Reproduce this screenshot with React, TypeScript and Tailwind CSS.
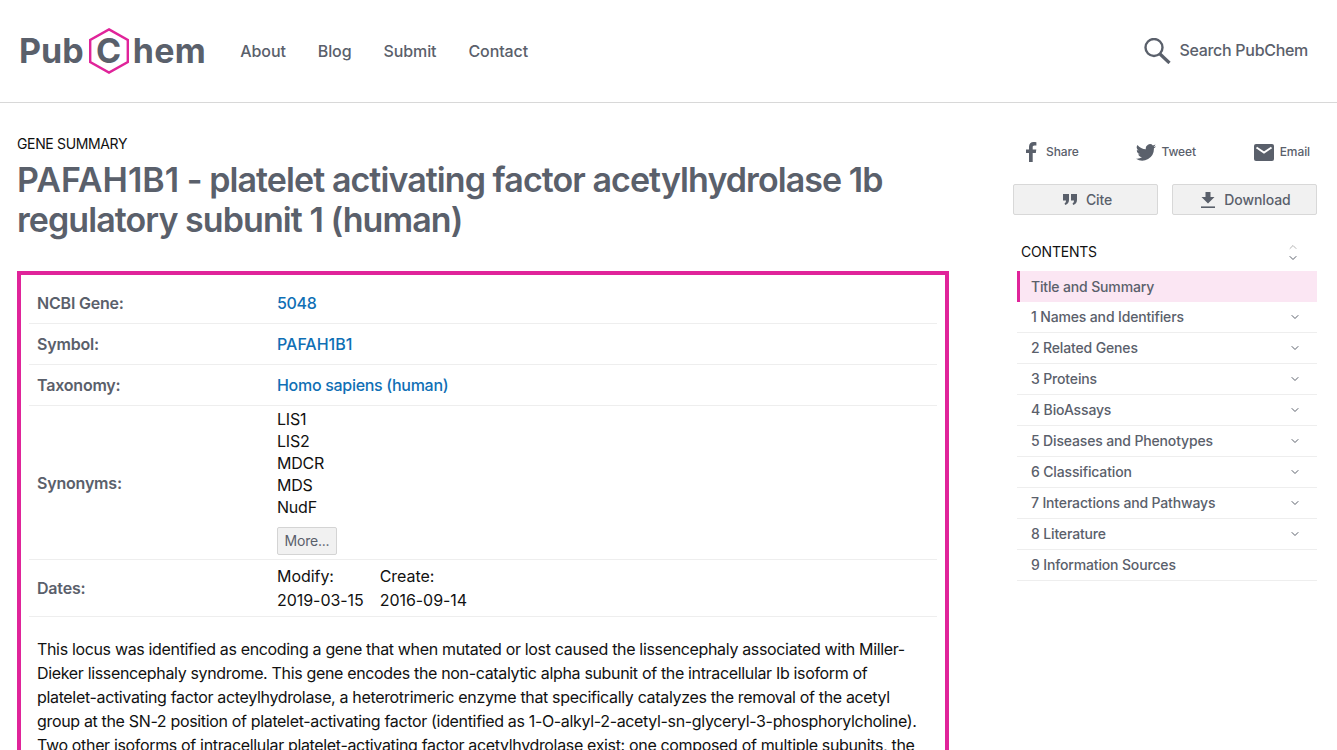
import { ChevronDown, ChevronUp } from 'lucide-react';

const navLinks = ['About', 'Blog', 'Submit', 'Contact'];

const contents = [
  { label: '1 Names and Identifiers', more: true },
  { label: '2 Related Genes', more: true },
  { label: '3 Proteins', more: true },
  { label: '4 BioAssays', more: true },
  { label: '5 Diseases and Phenotypes', more: true },
  { label: '6 Classification', more: true },
  { label: '7 Interactions and Pathways', more: true },
  { label: '8 Literature', more: true },
  { label: '9 Information Sources', more: false },
];

function Logo() {
  return (
    <div className="-ml-[1px] flex items-center text-[34px] font-bold leading-none text-[#5a606b]">
      <span>Pub</span>
      <span className="relative ml-[5px] mr-[4px] flex h-[46px] w-[40px] items-center justify-center">
        <svg viewBox="0 0 40 46" className="absolute inset-0 h-full w-full" fill="none">
          <path d="M20 1.4 L38.8 12 V34 L20 44.6 L1.2 34 V12 Z" stroke="#e0249a" strokeWidth="2.4" />
        </svg>
        <span>C</span>
      </span>
      <span className="tracking-[0.4px]">hem</span>
    </div>
  );
}

function SearchIcon() {
  return (
    <svg viewBox="0 0 27 26" className="h-[26px] w-[27px]" fill="none" stroke="#5a606b">
      <circle cx="10" cy="9.5" r="8.5" strokeWidth="2.4" />
      <path d="M16 16 L25.5 25" strokeWidth="3.2" />
    </svg>
  );
}

function FacebookIcon() {
  return (
    <svg viewBox="0 0 11 20" className="h-[20px] w-[11px]" fill="#5a606b">
      <path d="M3 20 V11 H0 V7.4 H3 V4.8 C3 1.7 4.8 0 7.6 0 C8.9 0 10 .1 10.4 .2 V3.4 H8.5 C7 3.4 6.7 4.1 6.7 5.2 V7.4 H10.3 L9.8 11 H6.7 V20 Z" />
    </svg>
  );
}

function TwitterIcon() {
  return (
    <svg viewBox="0 0 24 20" className="h-[17px] w-[20px]" fill="#5a606b">
      <path d="M24 2.4 a9.8 9.8 0 0 1-2.8.8 4.9 4.9 0 0 0 2.2-2.7 9.9 9.9 0 0 1-3.1 1.2 4.9 4.9 0 0 0-8.4 4.5 A14 14 0 0 1 1.7 1 a4.9 4.9 0 0 0 1.5 6.6 4.9 4.9 0 0 1-2.2-.6 4.9 4.9 0 0 0 3.9 4.9 4.9 4.9 0 0 1-2.2.1 4.9 4.9 0 0 0 4.6 3.4 A9.9 9.9 0 0 1 0 17.4 14 14 0 0 0 21.5 5 a10 10 0 0 0 2.5-2.6 Z" />
    </svg>
  );
}

function MailIcon() {
  return (
    <svg viewBox="0 0 20 17" className="h-[17px] w-[20px]">
      <rect width="20" height="17" rx="2" fill="#5a606b" />
      <path d="M2.5 3.5 L10 8.5 L17.5 3.5" fill="none" stroke="#ffffff" strokeWidth="2" />
    </svg>
  );
}

function QuoteIcon() {
  return (
    <svg viewBox="0 0 14 11" className="h-[11px] w-[14px]" fill="#5a606b">
      <path d="M0 0 H6 V6 C6 8.5 4.5 10.2 2.2 11 L1.5 9.4 C2.6 8.8 3 8 3 6.5 H0 Z" />
      <path d="M8 0 H14 V6 C14 8.5 12.5 10.2 10.2 11 L9.5 9.4 C10.6 8.8 11 8 11 6.5 H8 Z" />
    </svg>
  );
}

function DownloadIcon() {
  return (
    <svg viewBox="0 0 14 16" className="h-[16px] w-[14px]" fill="#5a606b">
      <path d="M4.5 0 H9.5 V5 H13.5 L7 11.5 L.5 5 H4.5 Z" />
      <rect y="14.4" width="14" height="1.6" />
    </svg>
  );
}

function Row({ label, children }: { label: string; children: React.ReactNode }) {
  return (
    <div className="flex items-center border-b border-[#eeeeee] px-2">
      <div className="w-[240px] shrink-0 font-semibold tracking-[-0.2px] text-[#5a606b]">{label}</div>
      <div>{children}</div>
    </div>
  );
}

export default function App() {
  return (
    <div className="h-[750px] overflow-hidden bg-white font-['Inter',sans-serif] text-[#111111]">
      <header className="flex h-[103px] items-center justify-between border-b border-[#d8d8d8] pl-5 pr-[29px]">
        <div className="flex items-center">
          <Logo />
          <nav className="ml-[34px] flex gap-8 font-medium tracking-[-0.1px] text-[#5a606b]">
            {navLinks.map((link) => (
              <a key={link}>{link}</a>
            ))}
          </nav>
        </div>
        <div className="flex items-center gap-[8px] font-medium tracking-[-0.3px] text-[#5a606b]">
          <SearchIcon />
          <span className="-mt-[2px]">Search PubChem</span>
        </div>
      </header>

      <div className="flex justify-between pl-[17px] pr-5">
        <main className="w-[932px] pt-[33px]">
          <div className="text-sm leading-[16px] tracking-[-0.35px]">GENE SUMMARY</div>
          <h1 className="mt-[8px] text-[34px] font-semibold leading-[40px] tracking-[-0.93px] text-[#5a606b]">
            <span className="tracking-normal">PAFAH1B1</span> - platelet activating factor acetylhydrolase 1b regulatory subunit 1 (human)
          </h1>

          <section className="mt-[31px] border-4 border-[#e0249a] px-2 pt-2">
            <Row label="NCBI Gene:">
              <a className="block py-2 font-medium tracking-[-0.3px] text-[#0f6fb5]">5048</a>
            </Row>
            <Row label="Symbol:">
              <a className="block py-2 font-medium text-[#0f6fb5]">PAFAH1B1</a>
            </Row>
            <Row label="Taxonomy:">
              <a className="block py-2 font-medium tracking-[-0.3px] text-[#0f6fb5]">Homo sapiens (human)</a>
            </Row>
            <Row label="Synonyms:">
              <div className="pb-[4px] pt-[2px] leading-[22px] tracking-[-0.2px]">
                <div>LIS1</div>
                <div>LIS2</div>
                <div>MDCR</div>
                <div>MDS</div>
                <div>NudF</div>
                <button className="mt-[9px] block h-[28px] w-[60px] rounded-[2px] border border-[#d4d4d4] bg-[#f1f1f1] text-sm text-[#5a606b]">
                  More...
                </button>
              </div>
            </Row>
            <Row label="Dates:">
              <div className="flex gap-4 py-[4px] leading-[24px] tracking-[-0.05px]">
                <div>
                  <div>Modify:</div>
                  <div>2019-03-15</div>
                </div>
                <div>
                  <div>Create:</div>
                  <div>2016-09-14</div>
                </div>
              </div>
            </Row>
            <p className="pb-4 pl-2 pr-[12px] pt-5 leading-[24px] tracking-[-0.34px]">
              This locus was identified as encoding a gene that when mutated or lost caused the lissencephaly associated with Miller-Dieker lissencephaly syndrome. This gene encodes the non-catalytic alpha subunit of the intracellular Ib isoform of platelet-activating factor acteylhydrolase, a heterotrimeric enzyme that specifically catalyzes the removal of the acetyl group at the SN-2 position of platelet-activating factor (identified as 1-O-alkyl-2-acetyl-sn-glyceryl-3-phosphorylcholine). Two other isoforms of intracellular platelet-activating factor acetylhydrolase exist: one composed of multiple subunits, the
            </p>
          </section>
        </main>

        <aside className="w-[304px] pt-[39px] text-[#5a606b]">
          <div className="flex items-center justify-between pl-[13px] pr-[7px] text-xs font-medium tracking-[-0.1px]">
            <span className="flex items-center gap-[9px]">
              <FacebookIcon />
              Share
            </span>
            <span className="flex items-center gap-[5px]">
              <TwitterIcon />
              Tweet
            </span>
            <span className="flex items-center gap-[6px]">
              <MailIcon />
              Email
            </span>
          </div>

          <div className="mt-[22px] flex gap-[14px] text-sm font-medium tracking-[-0.1px]">
            <button className="flex h-[31px] w-[145px] items-center justify-center gap-[9px] rounded-[2px] border border-[#d8d8d8] bg-[#f1f1f1] pl-[4px]">
              <QuoteIcon />
              Cite
            </button>
            <button className="flex h-[31px] w-[145px] items-center justify-center gap-[9px] rounded-[2px] border border-[#d8d8d8] bg-[#f1f1f1] pl-[3px]">
              <DownloadIcon />
              Download
            </button>
          </div>

          <div className="mt-[24px] flex h-[26px] items-center justify-between pl-2 pr-[18px] text-sm tracking-[-0.2px] text-[#111111]">
            <span>CONTENTS</span>
            <span className="flex flex-col items-center">
              <ChevronUp className="-mb-[1px] h-[12px] w-[12px] text-[#b5b5b5]" />
              <ChevronDown className="h-[12px] w-[12px] text-[#5a606b]" />
            </span>
          </div>

          <div className="ml-1 mt-[6px] text-sm font-medium tracking-[-0.15px]">
            <div className="flex h-[31px] items-center border-l-[3px] border-[#e0249a] bg-[#fbe6f3] pl-[11px]">
              Title and Summary
            </div>
            {contents.map((item) => (
              <div key={item.label} className="flex h-[31px] items-center justify-between border-b border-[#eeeeee] pl-[14px] pr-[16px]">
                <span>{item.label}</span>
                {item.more && <ChevronDown className="h-[12px] w-[12px]" />}
              </div>
            ))}
          </div>
        </aside>
      </div>
    </div>
  );
}
